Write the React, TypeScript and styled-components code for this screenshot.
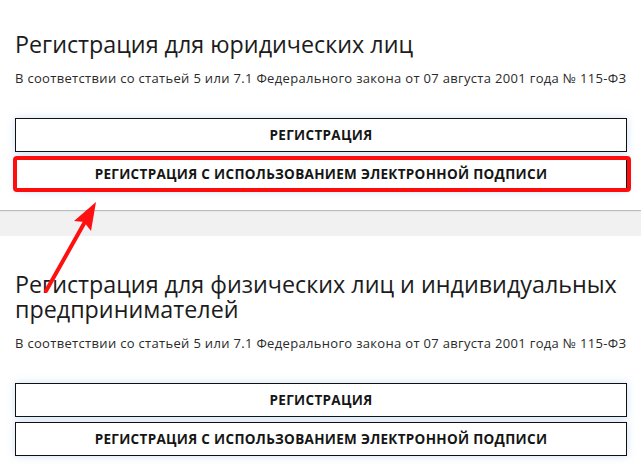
import React from "react";
import styled, { createGlobalStyle } from "styled-components";

const Global = createGlobalStyle`
  html, body { margin: 0; padding: 0; background: #ffffff; }
  body { font-family: "Open Sans", "Noto Sans", sans-serif; color: #1a1a1a; }
  * { box-sizing: border-box; }
`;

const Page = styled.div`
  position: relative;
  width: 641px;
  background: #f1f1f2;
`;

const Section = styled.section<{ $first?: boolean }>`
  background: #ffffff;
  padding: ${(p) => (p.$first ? "32px 14px 19px 15px" : "36px 14px 16px 15px")};
  box-shadow: ${(p) => (p.$first ? "0 1px 1px rgba(0,0,0,0.22)" : "none")};
  margin-bottom: ${(p) => (p.$first ? "26px" : "0")};
`;

const Title = styled.h2`
  margin: 0;
  font-weight: 400;
  font-size: 23.3px;
  line-height: 25px;
  color: #1c1c1c;
`;

const Note = styled.p`
  margin: 12px 0 31px;
  font-size: 13px;
  line-height: 18px;
  letter-spacing: 0.32px;
  color: #2a2a2a;
`;

const Buttons = styled.div`
  display: flex;
  flex-direction: column;
  gap: 5px;
`;

const ButtonWrap = styled.div`
  position: relative;
`;

const Button = styled.button`
  display: flex;
  align-items: center;
  justify-content: center;
  width: 100%;
  height: 34px;
  margin: 0;
  padding: 0;
  background: #ffffff;
  border: 1px solid #111111;
  border-radius: 0;
  box-shadow: 0 0 8px rgba(120, 170, 230, 0.35);
  font-family: "Open Sans", "Noto Sans", sans-serif;
  font-weight: 700;
  font-size: 13.5px;
  letter-spacing: 0.3px;
  color: #151515;
  text-transform: uppercase;
  cursor: pointer;
`;

const Highlight = styled.span`
  position: absolute;
  top: -1px;
  bottom: -1px;
  left: -2px;
  right: -4px;
  border: 4px solid #ff0d0d;
  border-radius: 4px;
  pointer-events: none;
`;

const Arrow = styled.svg`
  position: absolute;
  left: 0;
  top: 0;
  pointer-events: none;
`;

const text = "В соответствии со статьей 5 или 7.1 Федерального закона от 07 августа 2001 года № 115-ФЗ";

const Block: React.FC<{ title: string; first?: boolean; highlight?: boolean }> = ({ title, first, highlight }) => (
  <Section $first={first}>
    <Title>{title}</Title>
    <Note>{text}</Note>
    <Buttons>
      <ButtonWrap>
        <Button>Регистрация</Button>
      </ButtonWrap>
      <ButtonWrap>
        <Button>Регистрация с использованием электронной подписи</Button>
        {highlight && <Highlight />}
      </ButtonWrap>
    </Buttons>
  </Section>
);

export default function App() {
  return (
    <Page>
      <Global />
      <Block title="Регистрация для юридических лиц" first highlight />
      <Block title="Регистрация для физических лиц и индивидуальных предпринимателей" />
      <Arrow width="641" height="472" viewBox="0 0 641 472">
        <line x1="46" y1="291" x2="86" y2="220" stroke="#ff1010" strokeWidth="4" strokeLinecap="round" />
        <polygon points="96,202 74,221 84,222 91,231" fill="#ff1010" />
      </Arrow>
    </Page>
  );
}
